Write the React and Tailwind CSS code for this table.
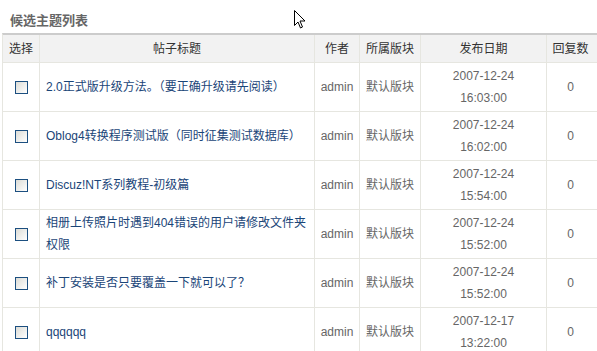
import React from "react";

const rows = [
  { title: "2.0正式版升级方法。（要正确升级请先阅读）", date: "2007-12-24", time: "16:03:00" },
  { title: "Oblog4转换程序测试版（同时征集测试数据库）", date: "2007-12-24", time: "16:02:00" },
  { title: "Discuz!NT系列教程-初级篇", date: "2007-12-24", time: "15:54:00" },
  { title: "相册上传照片时遇到404错误的用户请修改文件夹权限", date: "2007-12-24", time: "15:52:00" },
  { title: "补丁安装是否只要覆盖一下就可以了？", date: "2007-12-24", time: "15:52:00" },
  { title: "qqqqqq", date: "2007-12-17", time: "13:22:00" },
];

const font = "font-['Liberation_Sans','Noto_Sans_CJK_SC',sans-serif]";

const Checkbox = () => (
  <span className="block w-[13px] h-[13px] border border-[#1c4f80] bg-gradient-to-br from-[#dcdcd6] to-[#ffffff]" />
);

export default function App() {
  return (
    <div className={`relative w-[597px] h-[351px] overflow-hidden bg-white text-[12px] ${font}`}>
      {/* Mouse pointer */}
      <svg className="absolute left-[294px] top-[10px]" width="12" height="20" viewBox="0 0 12 20">
        <path d="M0.5 0.5 L0.5 15.5 L4 12 L6.5 18 L8.5 17 L6 11 L11 11 Z" fill="#ffffff" stroke="#000000" strokeWidth="1" />
      </svg>

      {/* Heading */}
      <div className="h-[33px] pl-[10px] pt-[14px] text-[13px] leading-[14px] font-bold text-[#666666]">
        候选主题列表
      </div>

      <div className="ml-[2px] w-[600px]">
        {/* Header */}
        <div className="flex h-[30px] border-t-2 border-t-[#cccccc] border-b border-b-[#e6e6e0] border-l border-l-[#e6e6e0] bg-[#f2f2f2] text-[#333333]">
          <div className="w-[37px] flex items-center justify-center border-r border-[#e6e6e0]">选择</div>
          <div className="w-[275px] flex items-center justify-center border-r border-[#e6e6e0]">帖子标题</div>
          <div className="w-[45px] flex items-center justify-center border-r border-[#e6e6e0]">作者</div>
          <div className="w-[61px] flex items-center justify-center border-r border-[#e6e6e0]">所属版块</div>
          <div className="w-[126px] flex items-center justify-center border-r border-[#e6e6e0]">发布日期</div>
          <div className="w-[47px] flex items-center justify-center">回复数</div>
        </div>

        {/* Rows */}
        {rows.map((r, i) => (
          <div key={i} className="flex h-[49px] border-b border-l border-[#e6e6e0] leading-[22px]">
            <div className="w-[37px] flex items-center justify-center border-r border-[#e6e6e0]">
              <Checkbox />
            </div>
            <div className="w-[275px] flex items-center pl-[6px] pr-[6px] border-r border-[#e6e6e0] text-[#1a4578]">
              <span>{r.title}</span>
            </div>
            <div className="w-[45px] flex items-center justify-center border-r border-[#e6e6e0] text-[#666666]">admin</div>
            <div className="w-[61px] flex items-center justify-center border-r border-[#e6e6e0] text-[#666666]">默认版块</div>
            <div className="w-[126px] flex flex-col items-center justify-center border-r border-[#e6e6e0] text-[#666666]">
              <span>{r.date}</span>
              <span>{r.time}</span>
            </div>
            <div className="w-[47px] flex items-center justify-center text-[#666666]">0</div>
          </div>
        ))}
      </div>
    </div>
  );
}
